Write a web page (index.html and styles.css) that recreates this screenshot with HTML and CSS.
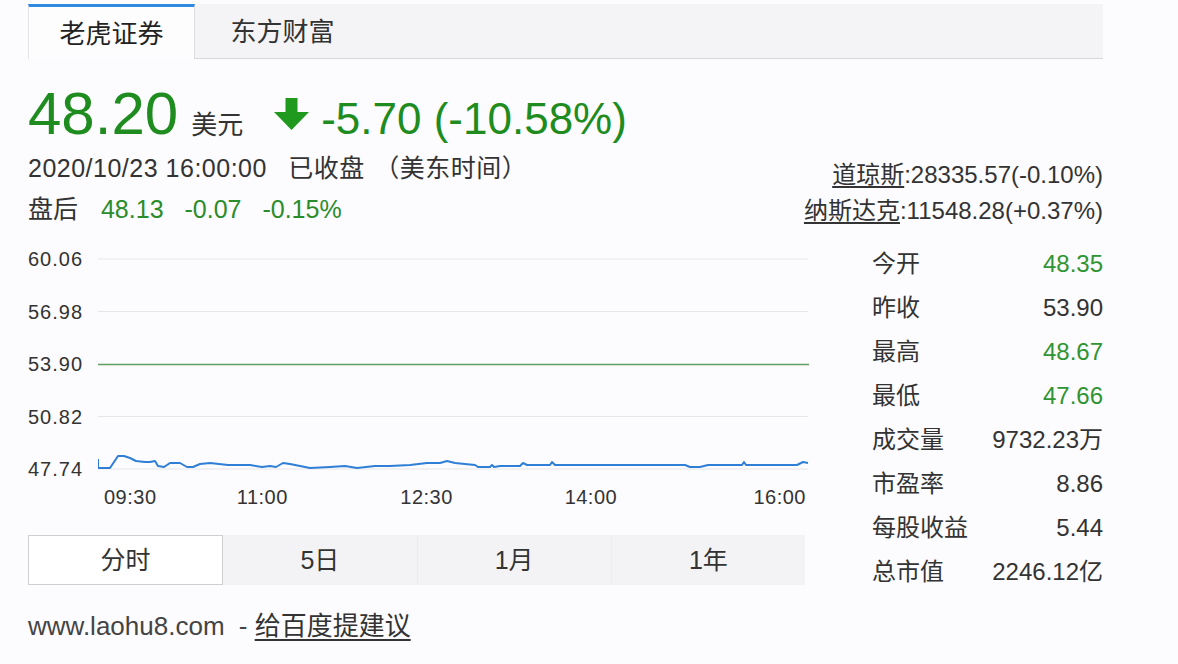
FILE: index.html
```html
<!DOCTYPE html>
<html lang="zh-CN">
<head>
<meta charset="utf-8">
<title>老虎证券</title>
<link rel="stylesheet" href="styles.css">
</head>
<body>
<div class="page">
  <div class="tabs">
    <div class="tab active">老虎证券</div>
    <div class="tab second">东方财富</div>
    <div class="tab-rest"></div>
  </div>

  <div class="quote">
    <div class="quote-left">
      <div class="price-row">
        <span class="price">48.20</span>
        <span class="unit">美元</span>
        <svg class="arrow" width="35" height="32" viewBox="0 0 35 32">
          <rect x="11.5" y="0" width="12" height="16" fill="#1f9a1f"/>
          <polygon points="0,14 35,14 17.5,32" fill="#1f9a1f"/>
        </svg>
        <span class="change">-5.70 (-10.58%)</span>
      </div>
      <div class="date-line">
        <span class="date">2020/10/23 16:00:00</span>
        <span class="status">已收盘</span>
        <span class="tz">（美东时间）</span>
      </div>
      <div class="after-line">
        <span class="after-label">盘后</span>
        <span class="g after-price">48.13</span>
        <span class="g after-chg">-0.07</span>
        <span class="g after-pct">-0.15%</span>
      </div>
    </div>
    <div class="quote-right">
      <div class="index-line"><span class="idx-name">道琼斯</span>:28335.57(-0.10%)</div>
      <div class="index-line"><span class="idx-name">纳斯达克</span>:11548.28(+0.37%)</div>
    </div>
  </div>

  <div class="main">
    <div class="chart-col">
      <div class="chart">
        <div class="yaxis">
          <span>60.06</span>
          <span>56.98</span>
          <span>53.90</span>
          <span>50.82</span>
          <span>47.74</span>
        </div>
        <svg class="plot" width="712" height="234" viewBox="98 247 712 234">
          <g stroke="#e6e6e8" stroke-width="1.2">
            <line x1="98" y1="259" x2="808" y2="259"/>
            <line x1="98" y1="311.5" x2="808" y2="311.5"/>
            <line x1="98" y1="416.5" x2="808" y2="416.5"/>
            <line x1="98" y1="469" x2="808" y2="469"/>
          </g>
          <line x1="98" y1="364.5" x2="809" y2="364.5" stroke="#5f9e62" stroke-width="1.6"/>
          <path fill="none" stroke="#2f7fd6" stroke-width="2" stroke-linejoin="round" d="M98,459 L98,468 L110,468 L118,456 L124,456 L130,458 L136,461 L145,462 L150,462 L155,461 L158,466 L164,467 L170,463 L180,463 L187,467 L193,467 L200,464 L210,463 L228,465 L250,465 L262,467 L270,466 L276,467 L283,463 L290,464 L300,466 L310,468 L330,467 L345,466 L357,468 L375,466 L390,466 L410,465 L427,463 L440,463 L447,461 L455,463 L475,465 L478,467 L490,467 L492,465 L494,467 L500,466 L520,466 L523,463 L527,465 L550,465 L552,462 L555,465 L685,465 L690,467 L700,467 L708,465 L742,465 L744,462 L746,465 L797,465 L803,462 L808,463"/>
        </svg>
      </div>
      <div class="xaxis">
        <span class="xl first">09:30</span>
        <span class="xl mid" style="left: 23.08%">11:00</span>
        <span class="xl mid" style="left: 46.15%">12:30</span>
        <span class="xl mid" style="left: 69.23%">14:00</span>
        <span class="xl last">16:00</span>
      </div>
      <div class="periods">
        <div class="period active">分时</div>
        <div class="period">5日</div>
        <div class="period">1月</div>
        <div class="period">1年</div>
      </div>
      <div class="footer">
        <span class="site">www.laohu8.com</span>
        <span class="dash">-</span>
        <span class="feedback">给百度提建议</span>
      </div>
    </div>

    <div class="stats">
      <span class="k">今开</span><span class="v g2">48.35</span>
      <span class="k">昨收</span><span class="v">53.90</span>
      <span class="k">最高</span><span class="v g2">48.67</span>
      <span class="k">最低</span><span class="v g2">47.66</span>
      <span class="k">成交量</span><span class="v">9732.23万</span>
      <span class="k">市盈率</span><span class="v">8.86</span>
      <span class="k">每股收益</span><span class="v">5.44</span>
      <span class="k">总市值</span><span class="v">2246.12亿</span>
    </div>
  </div>
</div>
</body>
</html>
```

FILE: styles.css
```css
* { box-sizing: border-box; }

body {
  margin: 0;
  background: #fcfbfd;
  color: #333;
  font-family: "Liberation Sans", Arial, "Noto Sans CJK SC", sans-serif;
}

.page {
  width: 1103px;
  padding: 4px 0 0 28px;
}

/* top tabs */
.tabs {
  display: flex;
  height: 55px;
  background: #f4f4f6;
  border-bottom: 1px solid #d9d9dc;
}
.tab {
  width: 167px;
  font-size: 26px;
  line-height: 56px;
  text-align: center;
  color: #333;
}
.tab.second { padding-left: 8px; }
.tab.active {
  background: #fdfdfe;
  border-top: 3px solid #2f8ae4;
  border-left: 1px solid #e4e4e6;
  border-right: 1px solid #dcdcdf;
  line-height: 54px;
  height: 55px;
  color: #222;
}
.tab-rest { flex: 1; }

/* quote header */
.quote {
  display: flex;
  justify-content: space-between;
  align-items: flex-start;
}
.quote-left { padding-top: 25px; }

.price-row {
  display: flex;
  align-items: baseline;
  height: 60px;
}
.price {
  font-size: 60px;
  line-height: 60px;
  color: #1e8c1e;
}
.unit {
  font-size: 26px;
  margin-left: 13px;
  color: #333;
}
.arrow {
  display: block;
  align-self: flex-start;
  margin-top: 14px;
  margin-left: 31px;
}
.change {
  font-size: 44px;
  margin-left: 12px;
  color: #1e8c1e;
}

.date-line {
  margin-top: 7px;
  font-size: 25px;
  line-height: 34px;
  letter-spacing: 0.5px;
}
.status { margin-left: 14px; }
.tz { margin-left: 2px; }

.after-line {
  margin-top: 7px;
  font-size: 25px;
  line-height: 34px;
}
.g { color: #2a8c2a; }
.after-price { margin-left: 16px; }
.after-chg { margin-left: 14px; }
.after-pct { margin-left: 14px; }

.quote-right {
  padding-top: 98px;
  margin-bottom: -4px;
  text-align: right;
}
.index-line {
  font-size: 24px;
  line-height: 36px;
  color: #333;
}
.idx-name { text-decoration: underline; text-underline-offset: 3px; }

/* main */
.main {
  display: flex;
  align-items: flex-start;
}
.chart-col {
  width: 782px;
  padding-top: 21px;
}
.chart { display: flex; }
.yaxis {
  width: 70px;
  height: 234px;
  display: flex;
  flex-direction: column;
  justify-content: space-between;
  font-size: 20px;
  line-height: 24px;
  letter-spacing: 1px;
  color: #333;
}
.plot { display: block; }

.xaxis {
  position: relative;
  margin-left: 70px;
  width: 712px;
  height: 32px;
  font-size: 20px;
  line-height: 32px;
  letter-spacing: 0.5px;
  color: #333;
}
.xl { position: absolute; top: 0; }
.xl.first { left: 6px; }
.xl.mid { transform: translateX(-50%); }
.xl.last { right: 4px; }

.periods {
  display: flex;
  margin-top: 22px;
  width: 777px;
  height: 50px;
  background: #f3f3f5;
}
.period {
  flex: 1;
  font-size: 25px;
  line-height: 50px;
  text-align: center;
  color: #333;
  border-left: 1px solid #ececee;
}
.period.active {
  background: #fff;
  border: 1px solid #cfcfd2;
  line-height: 48px;
}
.period.active + .period { border-left: none; }

.footer {
  margin-top: 21px;
  font-size: 26px;
  line-height: 40px;
  color: #444;
}
.dash { margin-left: 7px; }
.feedback {
  text-decoration: underline;
  text-underline-offset: 4px;
  color: #333;
}

/* stats */
.stats {
  margin-left: 62px;
  padding-top: 16px;
  width: 231px;
  display: grid;
  grid-template-columns: auto auto;
  justify-content: space-between;
  font-size: 24px;
  line-height: 44px;
  color: #333;
}
.v { text-align: right; }
.g2 { color: #2f9432; }
```
